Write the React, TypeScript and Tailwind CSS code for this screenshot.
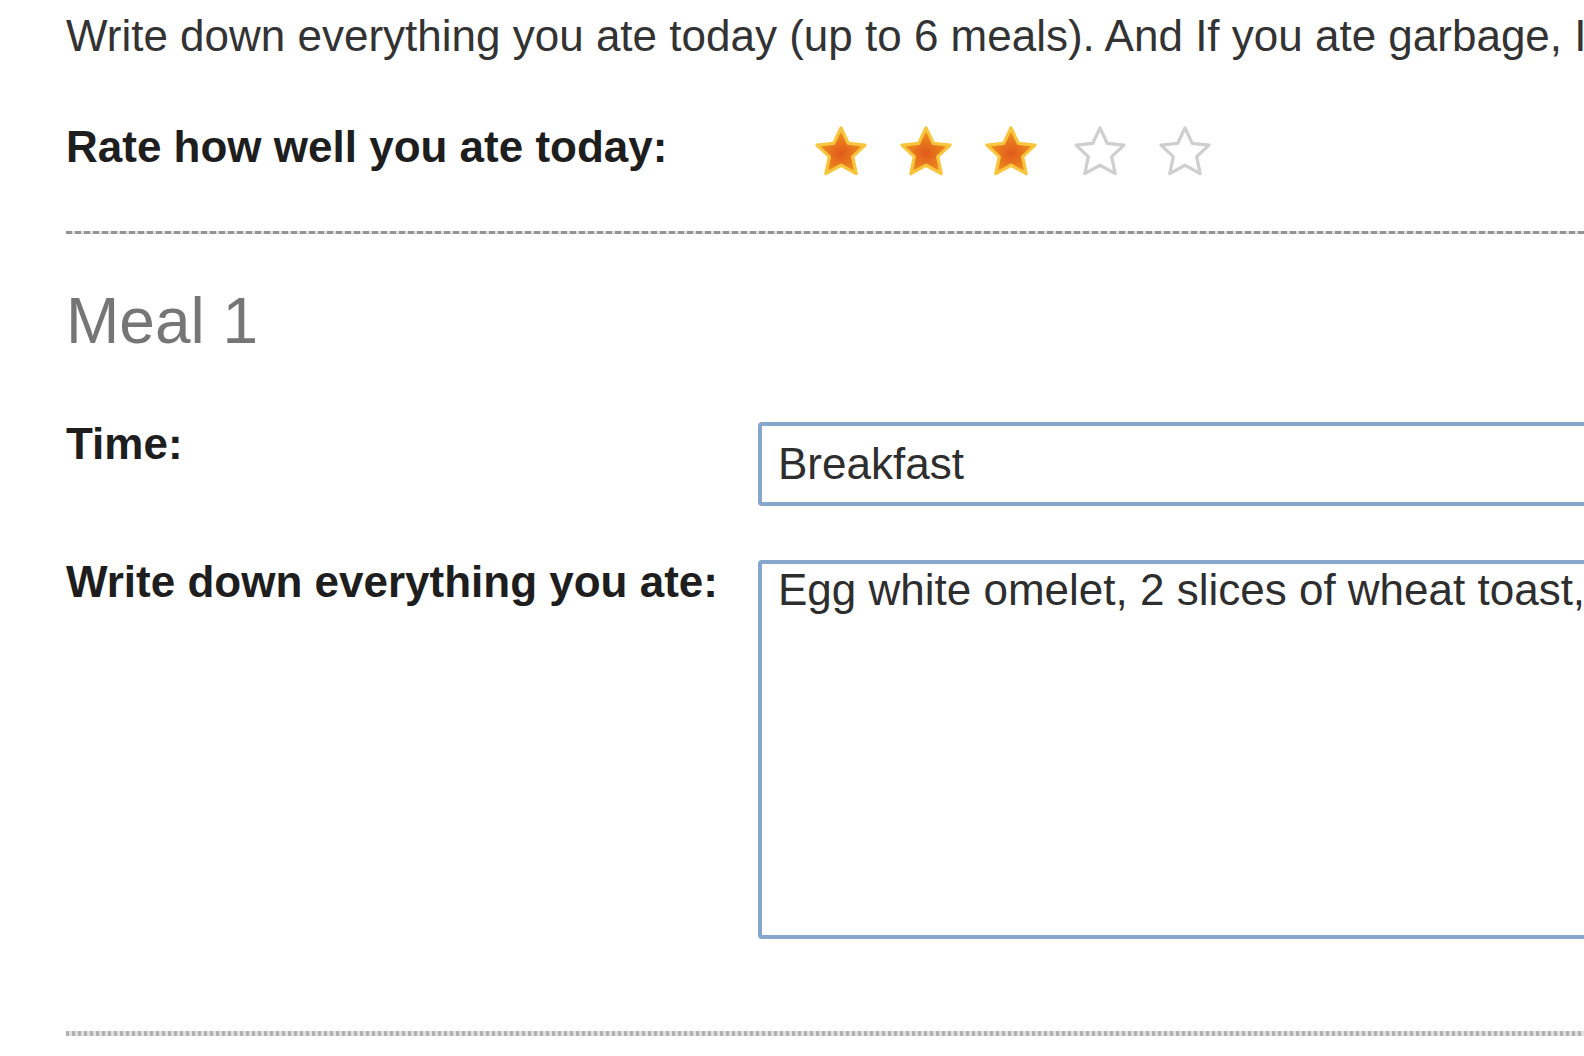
import React from "react";

const STAR_POINTS =
  "12,1.6 15.1,8.2 22.3,9 17,13.9 18.5,21.2 12,17.6 5.5,21.2 7,13.9 1.7,9 8.9,8.2";

const Star: React.FC<{ filled: boolean; id: string }> = ({ filled, id }) => (
  <svg width="56" height="54" viewBox="0 0 24 23" className="shrink-0">
    <defs>
      <radialGradient id={id} cx="50%" cy="55%" r="55%">
        <stop offset="0%" stopColor="#e05a1c" />
        <stop offset="70%" stopColor="#ec861e" />
        <stop offset="100%" stopColor="#f6b51f" />
      </radialGradient>
    </defs>
    {filled ? (
      <polygon
        points={STAR_POINTS}
        fill={`url(#${id})`}
        stroke="#f8c53e"
        strokeWidth="1.4"
        strokeLinejoin="round"
      />
    ) : (
      <polygon
        points={STAR_POINTS}
        fill="#ffffff"
        stroke="#cfcfcf"
        strokeWidth="1.4"
        strokeLinejoin="round"
      />
    )}
  </svg>
);

const App: React.FC = () => {
  const rating = 3;

  return (
    <div className="w-[1584px] h-[1056px] overflow-hidden bg-white pl-[66px] font-['Liberation_Sans',Arial,sans-serif] text-[#2e2e2e]">
      <div className="w-[1700px]">
        {/* intro */}
        <p className="pt-[11px] text-[44px] leading-[50px] whitespace-nowrap text-[#333]">
          Write down everything you ate today (up to 6 meals). And If you ate garbage, I want to know about it too.
        </p>

        {/* rating */}
        <div className="mt-[60px] flex items-center h-[60px]">
          <span className="w-[692px] shrink-0 text-[44px] leading-[44px] font-bold text-[#1e1e1e] -mt-[9px]">
            Rate how well you ate today:
          </span>
          <div className="flex items-center gap-[29px] pl-[55px]">
            {[1, 2, 3, 4, 5].map((n) => (
              <div key={n} className={n === 4 ? "ml-[4px]" : ""}>
                <Star id={`star-grad-${n}`} filled={n <= rating} />
              </div>
            ))}
          </div>
        </div>

        <div className="mt-[50px] h-[3px] bg-[repeating-linear-gradient(90deg,#939393_0_6px,#dcdcdc_6px_9px)]" />

        {/* meal 1 */}
        <h2 className="mt-[50px] text-[64px] leading-[74px] text-[#767676]">Meal 1</h2>

        <div className="mt-[64px] flex items-start">
          <label className="w-[692px] shrink-0 text-[44px] leading-[44px] font-bold text-[#1e1e1e]">
            Time:
          </label>
          <div className="flex-1 h-[84px] border-[4px] border-[#86a6cd] rounded-[4px] flex items-center pl-[16px] text-[44px] text-[#2e2e2e]">
            Breakfast
          </div>
        </div>

        <div className="mt-[54px] flex items-start">
          <label className="w-[692px] shrink-0 text-[44px] leading-[44px] font-bold text-[#1e1e1e]">
            Write down everything you ate:
          </label>
          <div className="flex-1 h-[379px] border-[4px] border-[#86a6cd] rounded-[4px] pl-[16px] pt-[1px] text-[44px] leading-[50px] text-[#2e2e2e] whitespace-nowrap overflow-hidden">
            Egg white omelet, 2 slices of wheat toast, a glass of orange juice
          </div>
        </div>

        <div className="mt-[92px] h-[5px] bg-[repeating-linear-gradient(90deg,#b0b0b0_0_3px,#e0e0e0_3px_6px)]" />
      </div>
    </div>
  );
};

export default App;
